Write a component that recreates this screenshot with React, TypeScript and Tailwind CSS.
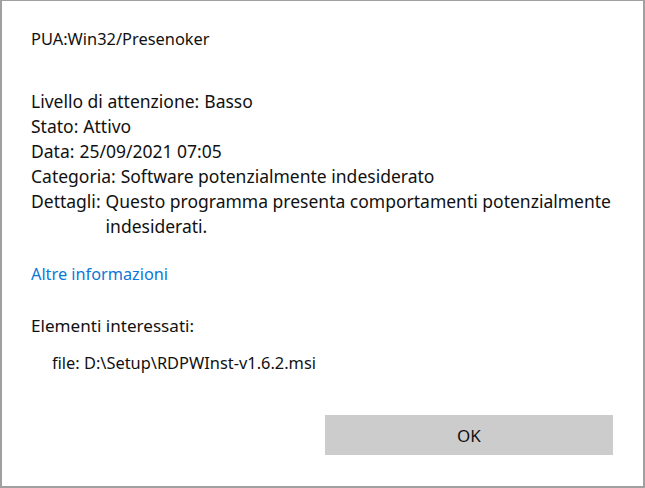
import React from "react";

const rows: { label: string; value: string }[] = [
    { label: "Livello di attenzione:", value: "Basso" },
    { label: "Stato:", value: "Attivo" },
    { label: "Data:", value: "25/09/2021 07:05" },
    { label: "Categoria:", value: "Software potenzialmente indesiderato" },
    { label: "Dettagli:", value: "Questo programma presenta comportamenti potenzialmente indesiderati." },
];

export default function App() {
    return (
        <div
            className="w-[645px] h-[488px] bg-white border-l-2 border-t border-r-2 border-b-2 border-[#a0a0a0] text-[17.5px] leading-[25px] text-[#111] overflow-hidden"
            style={{ fontFamily: '"Noto Sans", "Segoe UI", sans-serif' }}
        >
            <div className="pl-[29px] pt-[25px]">
                <p className="text-[16.4px]">PUA:Win32/Presenoker</p>

                <div className="mt-[38px] w-[592px]">
                    {rows.map((r) => (
                        <div key={r.label} className="flex gap-[5px]">
                            <span className="shrink-0">{r.label}</span>
                            <span>{r.value}</span>
                        </div>
                    ))}
                </div>

                <a className="block mt-[23px] text-[16.3px] text-[#0a78d8]">Altre informazioni</a>

                <p className="mt-[26px] text-[17.1px]">Elementi interessati:</p>
                <p className="mt-[12px] pl-[21px] text-[16.4px]">file: D:\Setup\RDPWInst-v1.6.2.msi</p>
            </div>

            <div className="flex justify-end pr-[30px] mt-[40px]">
                <button className="w-[288px] h-[40px] bg-[#cccccc] text-[17px]">OK</button>
            </div>
        </div>
    );
}
